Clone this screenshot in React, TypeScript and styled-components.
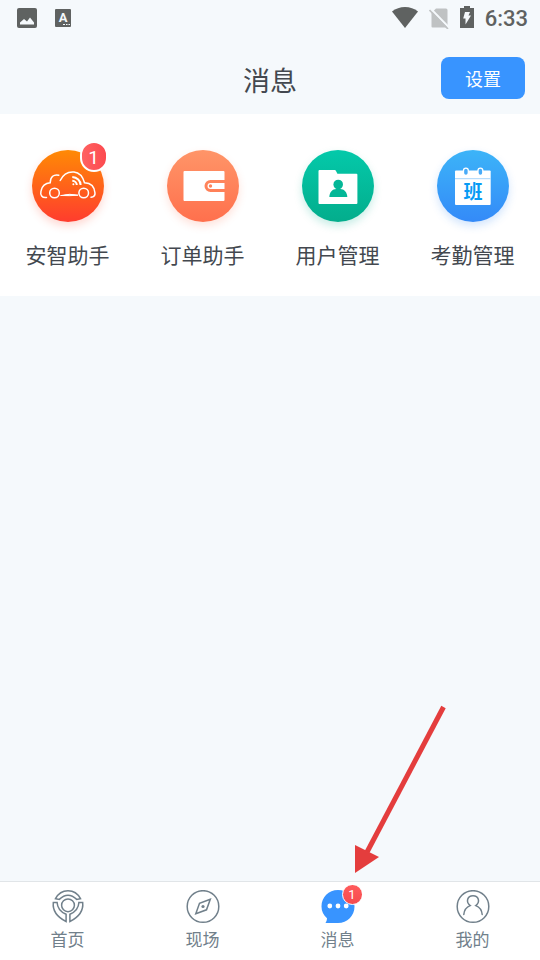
import React from "react";
import styled, { createGlobalStyle } from "styled-components";

const GlobalStyle = createGlobalStyle`
  * { box-sizing: border-box; }
  body { margin: 0; background: #f5f9fc; }
  button { font-family: inherit; cursor: pointer; }
`;

const Page = styled.div`
  position: relative;
  display: flex;
  flex-direction: column;
  min-height: 100vh;
  overflow: hidden;
  background: #f5f9fc;
  color: #43484f;
  font-family: "Noto Sans CJK SC", sans-serif;
`;

const StatusBar = styled.div`
  display: flex;
  align-items: center;
  justify-content: space-between;
  height: 36px;
  padding: 0 12px 0 17px;
  color: #5f6261;
`;

const StatusGroup = styled.div<{ $gap: number }>`
  display: flex;
  align-items: center;
  gap: ${(p) => p.$gap}px;
`;

const Clock = styled.time`
  font: 500 22px/34px Roboto, sans-serif;
  padding-top: 2px;
`;

const Header = styled.header`
  display: grid;
  grid-template-columns: 1fr auto 1fr;
  align-items: center;
  height: 78px;
  padding: 6px 15px 0;
`;

const Title = styled.h1`
  grid-column: 2;
  margin: 0;
  padding-top: 4px;
  font-size: 27px;
  line-height: 40px;
  font-weight: 400;
`;

const SettingsButton = styled.button`
  justify-self: end;
  padding: 0 24px;
  border: 0;
  border-radius: 8px;
  background: #3894ff;
  color: #fff;
  font-size: 18px;
  line-height: 42px;
`;

const AppGrid = styled.nav`
  display: grid;
  grid-template-columns: repeat(4, 1fr);
  padding: 36px 0 26px;
  background: #fff;
`;

const AppButton = styled.button`
  display: flex;
  flex-direction: column;
  align-items: center;
  gap: 16px;
  padding: 0;
  border: 0;
  background: none;
  color: #43484f;
  font-size: 21px;
  line-height: 32px;
`;

const AppIcon = styled.span<{ $from: string; $to: string; $glow: string }>`
  position: relative;
  width: 72px;
  height: 72px;
  border-radius: 50%;
  background: linear-gradient(${(p) => p.$from}, ${(p) => p.$to});
  box-shadow: 0 4px 9px ${(p) => p.$glow};

  svg { display: block; }
`;

const AppBadge = styled.span`
  position: absolute;
  top: -9px;
  right: -4px;
  width: 28px;
  height: 31px;
  border: 2px solid #fff;
  border-radius: 14px;
  background: linear-gradient(90deg, #ff6262, #fc4a4f);
  color: #fff;
  font: 400 19px/29px Roboto, sans-serif;
  text-align: center;
`;

const Content = styled.main`
  flex: 1;
`;

const TabBar = styled.nav`
  display: grid;
  grid-template-columns: repeat(4, 1fr);
  height: 79px;
  border-top: 1px solid #e1e5e8;
  background: #fff;
`;

const Tab = styled.button`
  display: flex;
  flex-direction: column;
  align-items: center;
  gap: 2px;
  padding: 8px 0 0;
  border: 0;
  background: none;
  color: #71808b;
  font-size: 17px;
  line-height: 25px;
`;

const TabIcon = styled.span`
  position: relative;
  width: 34px;
  height: 34px;

  svg { display: block; }
`;

const TabBadge = styled.span`
  position: absolute;
  top: -6px;
  right: -8px;
  width: 21px;
  height: 21px;
  border: 1px solid #fff;
  border-radius: 50%;
  background: linear-gradient(#ff5b5c, #f64b4f);
  color: #fff;
  font: 400 13px/20px Roboto, sans-serif;
  text-align: center;
`;

const Pointer = styled.svg`
  position: absolute;
  left: 65%;
  bottom: 84px;
  pointer-events: none;
`;

const CarIcon = () => (
  <svg width="72" height="72" viewBox="0 0 72 72" fill="none" stroke="#fff" strokeWidth="1.5" strokeLinecap="round">
    <circle cx="22.5" cy="43" r="4.8" />
    <circle cx="51.7" cy="43" r="4.8" />
    <path d="M14.5 47.4C10 48 8 45 9 41c1-5 4-8 9.2-8.300 .2-6 3.500-8.700 8.600-7.500" />
    <path d="M28.200 30.500C31 24.500 36 21.500 42 22c5.500.6 8.800 4.500 10.500 10.800C59 33 62.500 37 63 43c.2 2.500-1.500 4-4 4.200" />
    <path d="M29 45.500Q38 43.200 46 45.200Q38 46 29 45.500Z" fill="#fff" strokeWidth="1" />
    <path d="M40.300 27a9 8 0 0 1 8.300 8" strokeWidth="2" strokeLinecap="butt" />
    <path d="M40.300 30.700a5 4.300 0 0 1 4.500 4.300" strokeWidth="2" strokeLinecap="butt" />
    <circle cx="41.400" cy="34.200" r="1" fill="#fff" stroke="none" />
  </svg>
);

const WalletIcon = () => (
  <svg width="72" height="72" viewBox="0 0 72 72" fill="#fff">
    <path d="M17.500 21h39q1 0 1 1v8h-14a6 6 0 0 0 0 12h14v8q0 1-1 1h-39q-1 0-1-1V22q0-1 1-1Z" />
    <path fillRule="evenodd" d="M43.500 33h14v6h-14a3 3 0 0 1 0-6Zm0 1.300a1.700 1.700 0 1 0 0 3.400 1.700 1.700 0 0 0 0-3.400Z" />
  </svg>
);

const FolderIcon = () => (
  <svg width="72" height="72" viewBox="0 0 72 72">
    <path fill="#fff" d="M17.500 20h15.300q.8 0 1.200 1l1.400 2.800h19q1 0 1 1V53q0 1-1 1H17.500q-1 0-1-1V21q0-1 1-1Z" />
    <circle cx="36.200" cy="34.500" r="4.800" fill="#04b797" />
    <path fill="#04b797" d="M27.300 47c.2-5 3.200-8 7-8h4c3.800 0 6.800 3 7 8Z" />
  </svg>
);

const CalendarIcon = () => (
  <svg width="72" height="72" viewBox="0 0 72 72">
    <rect x="18" y="20.500" width="35.700" height="34.500" rx="1" fill="#fff" />
    <path d="M18 28.700h35.700" stroke="#a7d4fb" />
    <rect x="26.500" y="18.200" width="4.800" height="7.300" rx="2.400" fill="#48abf8" stroke="#fff" strokeWidth="1.300" />
    <rect x="41" y="18.200" width="4.800" height="7.300" rx="2.400" fill="#48abf8" stroke="#fff" strokeWidth="1.300" />
    <text x="36" y="49" textAnchor="middle" fontFamily="Noto Sans CJK SC, sans-serif" fontSize="19" fontWeight="700" fill="#079bf5">班</text>
  </svg>
);

const tabStroke = { fill: "none", stroke: "#71808b", strokeWidth: 1.5 };

const HomeIcon = () => (
  <svg width="34" height="34" viewBox="0 0 34 34" {...tabStroke}>
    <circle cx="17" cy="15.300" r="6.400" />
    <path d="M4.500 8.700C10 -1.900 24 -1.900 29.500 8.700L25.700 9.400Q17 1.200 8.300 9.400Z" />
    <path d="M2.300 12.500L6.100 12.500Q6.500 20.600 15.100 24.300V31.500Q1 24.500 2.300 12.500Z" />
    <path d="M31.700 12.500L27.900 12.500Q27.500 20.600 18.900 24.300V31.500Q33 24.500 31.700 12.500Z" />
  </svg>
);

const CompassIcon = () => (
  <svg width="34" height="34" viewBox="0 0 34 34" {...tabStroke}>
    <circle cx="17" cy="16.500" r="15.800" />
    <path d="M24.300 9.300L13.500 13.300L9.800 23.700L20.500 19.800Z" />
    <circle cx="17" cy="16.500" r="1.600" fill="#71808b" stroke="none" />
  </svg>
);

const ChatIcon = () => (
  <svg width="34" height="34" viewBox="0 0 34 34">
    <path fill="#3894ff" d="M17 0C7.600 0 .5 7.200 .5 16.500c0 4.800 2 8.700 5.500 11.800-.1 1.700-.5 3.300-1.500 4.700H17c9.300 0 16.500-7.200 16.500-16.500S26.300 0 17 0Z" />
    <circle cx="8.800" cy="16" r="2.400" fill="#fff" />
    <circle cx="17" cy="16" r="2.400" fill="#fff" />
    <circle cx="25.200" cy="16" r="2.400" fill="#fff" />
  </svg>
);

const ProfileIcon = () => (
  <svg width="34" height="34" viewBox="0 0 34 34" {...tabStroke} strokeLinecap="round">
    <circle cx="17" cy="16.500" r="15.800" />
    <path d="M7.800 24.500C8.300 19.500 10.500 17 14.200 15.600C9.500 12 11.300 5.700 17 5.700S24.500 12 19.800 15.600C23.500 17 25.700 19.500 26.200 24.500" />
  </svg>
);

const PhotoStatus = () => (
  <svg width="20" height="20" viewBox="0 0 20 20" fill="currentColor">
    <rect width="20" height="20" rx="2" />
    <path fill="#f5f9fc" d="M3 16.500v-2L7 11l3 2.500L13 9.500l4 5v2Z" />
  </svg>
);

const LetterStatus = () => (
  <svg width="16" height="18" viewBox="0 0 16 18">
    <rect width="16" height="18" rx="1" fill="currentColor" />
    <text x="8" y="13" textAnchor="middle" fontFamily="Roboto, sans-serif" fontSize="13" fontWeight="700" fill="#f5f9fc">A</text>
    <path d="M8 15.500h2m1 0h1.500m1 0H15" stroke="#f5f9fc" />
  </svg>
);

const WifiStatus = () => (
  <svg width="26" height="22" viewBox="0 0 26 22" fill="currentColor">
    <path d="M0 4.500C7-1.500 19-1.500 26 4.500L13 21Z" />
  </svg>
);

const SimStatus = () => (
  <svg width="20" height="22" viewBox="0 0 20 22">
    <path d="M7 1.500h10q1.500 0 1.500 1.500V20.500H3.500q-1 0-1-1V6Z" fill="#bfc2c3" />
    <path d="M2 2L20 20.500" stroke="#f5f9fc" strokeWidth="2" />
    <path d="M.5 3L19 22" stroke="#bfc2c3" strokeWidth="1.600" />
  </svg>
);

const BatteryStatus = () => (
  <svg width="14" height="24" viewBox="0 0 14 24">
    <path fill="currentColor" d="M4 0h6v2h4v20H0V2h4Z" />
    <path fill="#f5f9fc" d="M5 6h5L8.500 9.500H11L5.500 18.500V12.500H3.200Z" />
  </svg>
);

const apps = [
  { label: "安智助手", from: "#ff8a05", to: "#ff3c2e", glow: "#ff4f3038", icon: <CarIcon />, badge: 1 },
  { label: "订单助手", from: "#ff9568", to: "#ff704d", glow: "#ff704d33", icon: <WalletIcon /> },
  { label: "用户管理", from: "#04c9aa", to: "#03ad8c", glow: "#03ad8c38", icon: <FolderIcon /> },
  { label: "考勤管理", from: "#3cb4f8", to: "#348af8", glow: "#348af838", icon: <CalendarIcon /> },
];

const tabs = [
  { label: "首页", icon: <HomeIcon /> },
  { label: "现场", icon: <CompassIcon /> },
  { label: "消息", icon: <ChatIcon />, badge: 1 },
  { label: "我的", icon: <ProfileIcon /> },
];

export default function App() {
  return (
    <Page>
      <GlobalStyle />
      <StatusBar>
        <StatusGroup $gap={18}>
          <PhotoStatus />
          <LetterStatus />
        </StatusGroup>
        <StatusGroup $gap={11}>
          <WifiStatus />
          <SimStatus />
          <BatteryStatus />
          <Clock>6:33</Clock>
        </StatusGroup>
      </StatusBar>
      <Header>
        <Title>消息</Title>
        <SettingsButton type="button">设置</SettingsButton>
      </Header>
      <AppGrid aria-label="应用">
        {apps.map((app) => (
          <AppButton key={app.label} type="button">
            <AppIcon $from={app.from} $to={app.to} $glow={app.glow}>
              {app.icon}
              {app.badge && <AppBadge>{app.badge}</AppBadge>}
            </AppIcon>
            {app.label}
          </AppButton>
        ))}
      </AppGrid>
      <Content />
      <TabBar aria-label="主导航">
        {tabs.map((tab) => (
          <Tab key={tab.label} type="button" aria-current={tab.badge ? "page" : undefined}>
            <TabIcon>
              {tab.icon}
              {tab.badge && <TabBadge>{tab.badge}</TabBadge>}
            </TabIcon>
            {tab.label}
          </Tab>
        ))}
      </TabBar>
      <Pointer width="100" height="176" viewBox="0 0 100 176" aria-hidden="true">
        <path d="M92.500 7L15 154" stroke="#e43d3d" strokeWidth="5" />
        <path d="M4 145L28 157L4 173Z" fill="#e43d3d" />
      </Pointer>
    </Page>
  );
}
